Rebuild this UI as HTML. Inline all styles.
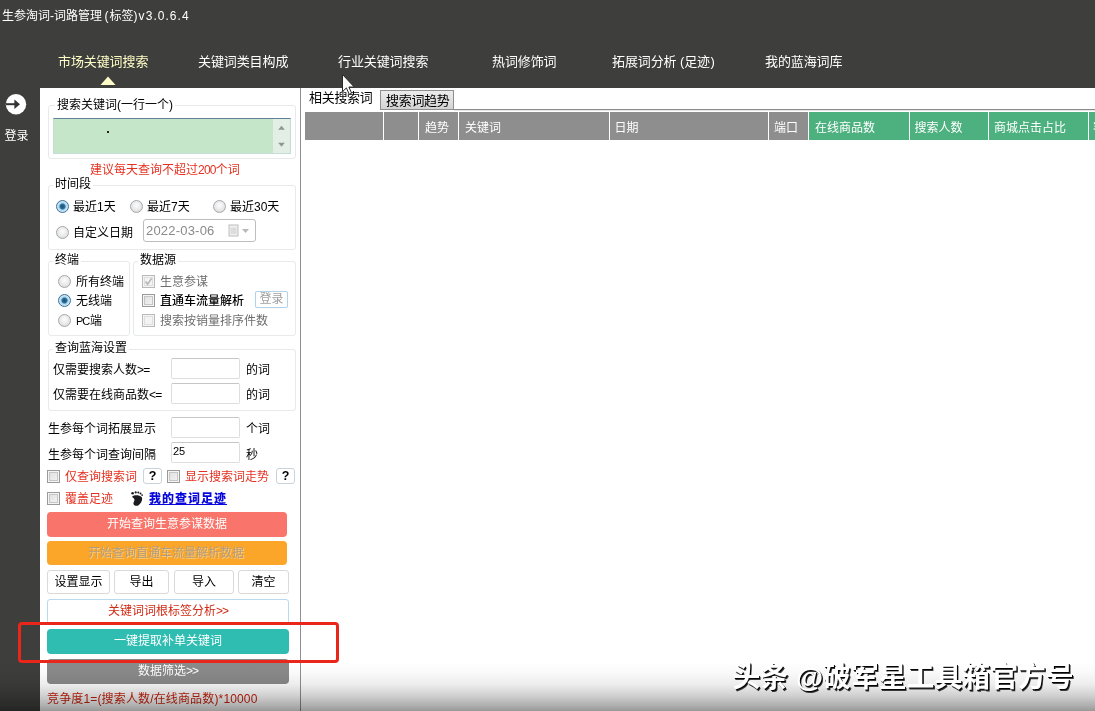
<!DOCTYPE html>
<html lang="zh-CN">
<head>
<meta charset="utf-8">
<title>生参淘词-词路管理(标签)v3.0.6.4</title>
<style>
*{box-sizing:border-box;margin:0;padding:0}
html,body{width:1095px;height:711px;overflow:hidden}
body{position:relative;will-change:transform;background:#3e3e3c;font-family:"Liberation Sans","Noto Sans CJK SC",sans-serif;font-size:12px;line-height:14px;color:#000}
.a{position:absolute;white-space:nowrap}
.t{position:absolute;white-space:nowrap;line-height:14px;height:14px}
.w{color:#fff}
.red{color:#e5301f}
.gry{color:#6d6d6d}
.tab{position:absolute;top:54px;font-size:13px;line-height:16px;color:#fff;white-space:nowrap;letter-spacing:-0.1px}
.panel{position:absolute;left:40px;top:88px;width:260px;height:623px;background:#fff}
.right{position:absolute;left:301px;top:88px;width:794px;height:623px;background:#fff}
.fs{position:absolute;border:1px solid #e7e9eb;border-radius:3px}
.lg{position:absolute;background:#fff;padding:0 2px;white-space:nowrap;line-height:14px;height:14px}
.rd{position:absolute;width:13px;height:13px;border-radius:50%;border:1px solid #a4a8ac;background:radial-gradient(circle at 50% 40%,#fdfdfd 0,#e6e6e6 60%,#d0d0d0 100%)}
.rd.on{border-color:#3c6e96;background:radial-gradient(circle,#1d4f72 0,#2c6f9c 2.4px,#a9d6ee 3.6px,#c9e6f5 5px,#b5d9ec 100%)}
.cb{position:absolute;width:13px;height:13px;border:1px solid #999a9a;background:linear-gradient(135deg,#dcdcdc 0,#f6f6f6 100%);box-shadow:inset 0 0 0 1px #f4f4f4, inset 0 0 0 2px #c6c6c6}
.cb.dis{border-color:#b9b9b9;box-shadow:inset 0 0 0 1px #f4f4f4, inset 0 0 0 2px #dedede;background:#f3f3f3}
.inp{position:absolute;border:1px solid #dedede;border-top-color:#c6c6c6;border-radius:2px;background:#fff}
.btn{position:absolute;border:1px solid #d9d9d9;border-radius:3px;background:#fff;text-align:center;line-height:22px;white-space:nowrap}
.big{position:absolute;left:47px;width:240px;border-radius:4px;text-align:center;color:#fff;white-space:nowrap}
.th{position:absolute;top:112px;height:28px;background:#8e8e8e;color:#fff;line-height:30px;padding-top:1px;padding-left:6px;white-space:nowrap;overflow:hidden}
.th.g{background:#4db07f}
</style>
</head>
<body>
<!-- title bar -->
<div class="t w" style="left:2px;top:9px">生参淘词-词路管理<span style="margin-left:2.6px;letter-spacing:1px">(</span>标签<span style="letter-spacing:1px">)</span><span style="letter-spacing:1.05px">v3.0.6.4</span></div>

<!-- top tabs -->
<div class="tab" style="left:58px;color:#ffffc8">市场关键词搜索</div>
<div class="tab" style="left:198px">关键词类目构成</div>
<div class="tab" style="left:338px">行业关键词搜索</div>
<div class="tab" style="left:492px">热词修饰词</div>
<div class="tab" style="left:612px">拓展词分析<span style="margin-left:3.4px">(</span>足迹<span style="margin-left:0.5px">)</span></div>
<div class="tab" style="left:765px">我的蓝海词库</div>
<svg class="a" style="left:100px;top:76px" width="16" height="9" viewBox="0 0 16 9"><polygon points="8,0.5 15.5,9 0.5,9" fill="#fffbc8"/></svg>

<!-- sidebar login -->
<svg class="a" style="left:4px;top:92px" width="24" height="24" viewBox="0 0 24 24">
  <circle cx="12" cy="12.2" r="10.2" fill="#fff"/>
  <rect x="2" y="11.2" width="11" height="2" fill="#333"/>
  <polygon points="10.4,7.4 16,12.2 10.4,17 " fill="#333"/>
</svg>
<div class="t w" style="left:4.5px;top:129px">登录</div>

<!-- left panel -->
<div class="panel"></div>
<div class="right"></div>
<div class="a" style="left:300px;top:88px;width:1px;height:623px;background:#8f8f8f"></div>

<!-- group: search keywords -->
<div class="fs" style="left:48px;top:104.5px;width:248px;height:54px"></div>
<div class="lg" style="left:55px;top:98px">搜索关键词(一行一个)</div>
<div class="a" style="left:53px;top:117.5px;width:237.5px;height:36.5px;background:#c6e6ca;border:1px solid #c4dcd8;border-top-color:#5f8096"></div>
<div class="a" style="left:273px;top:119px;width:17px;height:34px;background:#e3eee4"></div>
<svg class="a" style="left:276px;top:123px" width="11" height="26" viewBox="0 0 11 26"><polygon points="5.5,2.8 8.8,6.8 2.2,6.8" fill="#8c9793"/><polygon points="2.2,19.8 8.8,19.8 5.5,23.8" fill="#8c9793"/></svg>
<div class="a" style="left:107px;top:131px;width:2px;height:2px;background:#222"></div>
<div class="t red" style="left:90px;top:163px">建议每天查询不超过<span style="letter-spacing:-0.8px">200</span>个词</div>

<!-- group: time range -->
<div class="fs" style="left:48px;top:184.5px;width:248px;height:65.5px"></div>
<div class="lg" style="left:53px;top:177px">时间段</div>
<div class="rd on" style="left:56px;top:200px"></div>
<div class="t" style="left:73px;top:200px">最近1天</div>
<div class="rd" style="left:130px;top:200px"></div>
<div class="t" style="left:147px;top:200px">最近7天</div>
<div class="rd" style="left:213px;top:200px"></div>
<div class="t" style="left:230px;top:200px">最近30天</div>
<div class="rd" style="left:56px;top:225.5px"></div>
<div class="t" style="left:73px;top:226px">自定义日期</div>
<div class="inp" style="left:143px;top:219px;width:113px;height:23px;border-color:#bdbdbd;border-radius:3px"></div>
<div class="t" style="left:146px;top:224px;color:#8a8a8a;font-size:13px;letter-spacing:0.2px">2022-03-06</div>
<svg class="a" style="left:228px;top:224px" width="23" height="14" viewBox="0 0 23 14">
  <rect x="1" y="1" width="9" height="11" fill="#f1f1f1" stroke="#bdbdbd"/>
  <rect x="2.5" y="3.5" width="6" height="6.5" fill="#dcdcdc"/>
  <polygon points="14,5 21,5 17.5,9" fill="#b9b9b9"/>
</svg>

<!-- group: terminal -->
<div class="fs" style="left:48px;top:261px;width:82px;height:75px"></div>
<div class="lg" style="left:53px;top:253px">终端</div>
<div class="rd" style="left:58px;top:275px"></div>
<div class="t" style="left:76px;top:275px">所有终端</div>
<div class="rd on" style="left:58px;top:294px"></div>
<div class="t" style="left:76px;top:294px">无线端</div>
<div class="rd" style="left:58px;top:314px"></div>
<div class="t" style="left:76px;top:314px"><span style="font-size:11px;letter-spacing:-1.2px">PC</span><span style="margin-left:1px">端</span></div>

<!-- group: data source -->
<div class="fs" style="left:133px;top:261px;width:163px;height:75px"></div>
<div class="lg" style="left:138px;top:253px">数据源</div>
<div class="cb dis" style="left:142px;top:275px"></div>
<svg class="a" style="left:143px;top:276px" width="11" height="11" viewBox="0 0 11 11"><path d="M2.5 5.5 L4.6 8.2 L8.6 2.4" fill="none" stroke="#b5b5b5" stroke-width="1.6"/></svg>
<div class="t gry" style="left:160px;top:275px">生意参谋</div>
<div class="cb" style="left:142px;top:294px"></div>
<div class="t" style="left:160px;top:294px;font-weight:500">直通车流量解析</div>
<div class="btn" style="left:255px;top:291px;width:33px;height:17px;line-height:15px;border-color:#b3d2e7;color:#a0a0a0;border-radius:2px;box-shadow:0 0 1px #cfe3f0">登录</div>
<div class="cb dis" style="left:142px;top:314px"></div>
<div class="t gry" style="left:160px;top:314px">搜索按销量排序件数</div>

<!-- group: blue ocean settings -->
<div class="fs" style="left:48px;top:349px;width:248px;height:62px"></div>
<div class="lg" style="left:53px;top:341px">查询蓝海设置</div>
<div class="t" style="left:53px;top:363px">仅需要搜索人数<span style="letter-spacing:-0.8px">&gt;=</span></div>
<div class="inp" style="left:171px;top:358px;width:69px;height:21px"></div>
<div class="t" style="left:246px;top:363px">的词</div>
<div class="t" style="left:53px;top:388px">仅需要在线商品数<span style="letter-spacing:-0.8px">&lt;=</span></div>
<div class="inp" style="left:171px;top:383px;width:69px;height:21px"></div>
<div class="t" style="left:246px;top:388px">的词</div>

<div class="t" style="left:48px;top:422px">生参每个词拓展显示</div>
<div class="inp" style="left:171px;top:417px;width:69px;height:21px"></div>
<div class="t" style="left:246px;top:422px">个词</div>
<div class="t" style="left:48px;top:448px">生参每个词查询间隔</div>
<div class="inp" style="left:171px;top:442px;width:69px;height:21px"></div>
<div class="t" style="left:173px;top:444px;font-size:11px">25</div>
<div class="t" style="left:246px;top:448px">秒</div>

<div class="cb" style="left:47px;top:469.5px"></div>
<div class="t red" style="left:65px;top:470px">仅查询搜索词</div>
<div class="btn" style="left:143px;top:468px;width:19px;height:16px;line-height:14px;font-weight:bold;font-size:12.5px;border-color:#c9d3dc">?</div>
<div class="cb" style="left:167px;top:469.5px"></div>
<div class="t red" style="left:185px;top:470px">显示搜索词走势</div>
<div class="btn" style="left:276px;top:468px;width:19px;height:16px;line-height:14px;font-weight:bold;font-size:12.5px;border-color:#c9d3dc">?</div>

<div class="cb" style="left:47px;top:492px"></div>
<div class="t red" style="left:65px;top:492px">覆盖足迹</div>
<svg class="a" style="left:131px;top:491px" width="13" height="16" viewBox="0 0 13 16">
  <path d="M1.2,5.6 C3,3.9 8,3.8 10.7,6 C11.9,8.2 10.6,12 7.6,14.2 C5.6,15.4 2.5,14.6 2.4,12.4 C2.4,10.6 4,9.6 3.3,7.9 C2.7,6.9 1.2,6.6 1.2,5.6 Z" fill="#1c1c20"/>
  <circle cx="1.6" cy="2.3" r="1.3" fill="#1c1c20"/>
  <circle cx="4.7" cy="1.4" r="1.1" fill="#1c1c20"/>
  <circle cx="7.3" cy="1.5" r="1" fill="#1c1c20"/>
  <circle cx="9.5" cy="2.5" r="0.95" fill="#1c1c20"/>
  <circle cx="11.1" cy="4.1" r="0.85" fill="#1c1c20"/>
</svg>
<div class="t" style="left:149px;top:492px;color:#0808dc;font-weight:900;text-decoration:underline;letter-spacing:1px">我的查词足迹</div>

<!-- big buttons -->
<div class="big" style="top:512px;height:24.5px;line-height:24px;background:#f9756b">开始查询生意参谋数据</div>
<div class="big" style="top:540.5px;height:24.5px;line-height:25px;background:#fba628;color:#b29d82;padding-right:2px;text-shadow:1px 1px 0 rgba(255,226,170,.6)">开始查询直通车流量解析数据</div>

<div class="btn" style="left:47px;top:570px;width:63px;height:24px">设置显示</div>
<div class="btn" style="left:114px;top:570px;width:55px;height:24px">导出</div>
<div class="btn" style="left:174px;top:570px;width:60px;height:24px">导入</div>
<div class="btn" style="left:238px;top:570px;width:51px;height:24px">清空</div>

<div class="btn" style="left:47px;top:599px;width:242px;height:25px;border-color:#b9d9ee;color:#cf2a12;line-height:23px">关键词词根标签分析<span style="letter-spacing:-1px">&gt;&gt;</span></div>
<div class="big" style="top:629px;height:25px;line-height:25px;width:242px;background:#2fbdb1">一键提取补单关键词</div>
<div class="big" style="top:659px;height:25px;line-height:25px;width:242px;background:#8a8a8a">数据筛选<span style="letter-spacing:-1px">&gt;&gt;</span></div>
<div class="t" style="left:47px;top:692px;color:#c9230f;letter-spacing:0.15px">竞争度1=(搜索人数/在线商品数)*10000</div>

<!-- red highlight rectangle -->
<div class="a" style="left:18px;top:622px;width:321px;height:40.5px;border:3.3px solid #ea2519;border-radius:4px"></div>

<!-- right: tabs -->
<div class="a" style="left:454px;top:109px;width:641px;height:1px;background:#8c8c8c"></div>
<div class="a" style="left:454px;top:110px;width:641px;height:1px;background:#e6e6e6"></div>
<div class="a" style="left:380px;top:90px;width:74px;height:20px;border:1px solid #8f8f8f;background:linear-gradient(#ececec,#d3d3d3)"></div>
<div class="a" style="left:309px;top:90px;font-size:13px;line-height:16px;letter-spacing:-0.3px">相关搜索词</div>
<div class="a" style="left:386px;top:93px;font-size:13px;line-height:16px;letter-spacing:-0.3px">搜索词趋势</div>

<!-- table header -->
<div class="th" style="left:305px;width:78px"></div>
<div class="th" style="left:384px;width:34px"></div>
<div class="th" style="left:419px;width:39px">趋势</div>
<div class="th" style="left:459px;width:149.5px">关键词</div>
<div class="th" style="left:609.5px;width:158.5px;padding-left:5px">日期</div>
<div class="th" style="left:769px;width:39px;padding-left:5px">端口</div>
<div class="th g" style="left:809px;width:99.5px">在线商品数</div>
<div class="th g" style="left:909.5px;width:78.5px;padding-left:5px">搜索人数</div>
<div class="th g" style="left:989px;width:99px;padding-left:5px">商城点击占比</div>
<div class="th g" style="left:1089px;width:6px;padding-left:4px">客</div>

<!-- mouse cursor -->
<svg class="a" style="left:340.8px;top:73.2px" width="16" height="25" viewBox="0 0 16 25">
  <polygon points="1.5,1.5 1.5,18.6 5.4,14.9 8.2,21.3 10.6,20.2 7.9,14 13.2,14" fill="#fff" stroke="#2a2a2a" stroke-width="1"/>
</svg>

<!-- bottom shadow gradient -->
<div class="a" style="left:0;top:655px;width:1095px;height:56px;background:linear-gradient(to bottom,rgba(0,0,0,0) 0,rgba(0,0,0,0) 12%,rgba(0,0,0,0.02) 30%,rgba(0,0,0,0.07) 52%,rgba(0,0,0,0.18) 72%,rgba(0,0,0,0.32) 91%,rgba(0,0,0,0.40) 100%)"></div>

<!-- watermark -->
<div class="a" style="left:732.5px;top:660px;font-size:27.85px;line-height:36px;color:#fff;font-weight:700;text-shadow:1px 1px 0 rgba(0,0,0,0.95),1.6px 1.6px 0.5px rgba(0,0,0,0.75)">头条 @破军星工具箱官方号</div>
</body>
</html>
